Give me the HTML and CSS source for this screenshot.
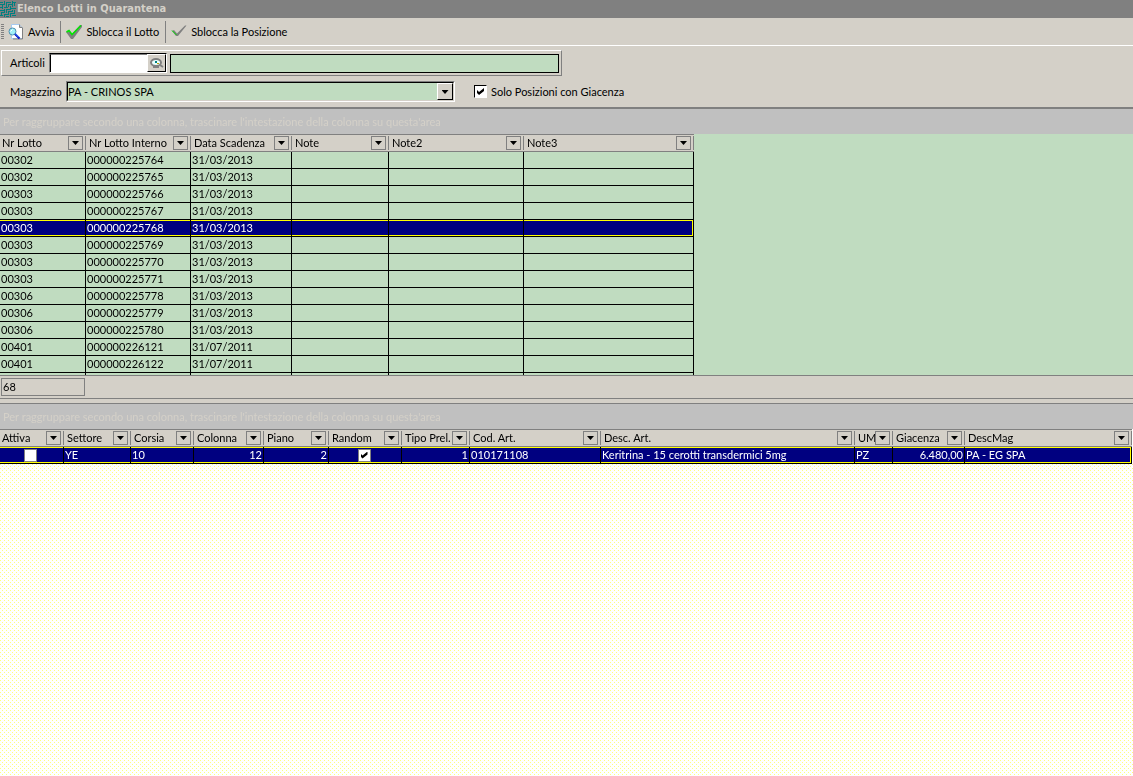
FILE: index.html
```
<!DOCTYPE html>
<html lang="it">
<head>
<meta charset="utf-8">
<title>Elenco Lotti in Quarantena</title>
<link rel="stylesheet" href="styles.css">
</head>
<body>
<header class="titlebar">
  <svg class="titlebar-icon" width="16" height="16" viewBox="0 0 16 16" fill="none" stroke="#008080" shape-rendering="crispEdges" aria-hidden="true">
    <path d="M0 1.500h3M4.500 0v4M0 3.500h5M2.500 4v4M0 6.500h2M6.500 1v6M4 6.500h4M7 1.500h4M8.500 3v3M9 3.500h3M12.500 0v6M14.500 1v4M13 1.500h3M10.500 5v4M11 7.500h5M0 9.500h4M4.500 8v4M6 8.500h4M6.500 9v3M1.500 11v4M2 11.500h2M0 14.500h3M4.500 13v3M5 13.500h4M8.500 10v4M9 10.500h4M12.500 9v2M14.500 9v4M10.500 12v4M11 12.500h4M12 14.500h4M6 15.500h3"/>
  </svg>
  <h1 class="titlebar-text">Elenco Lotti in Quarantena</h1>
</header>

<nav class="toolbar" aria-label="Comandi">
  <span class="grip"></span>
  <button class="tool" type="button">
    <svg width="16" height="16" viewBox="0 0 16 16" aria-hidden="true">
      <path d="M3.500 .5h8l3 3v11h-11z" fill="#fff" stroke="#a6caf0"/>
      <path d="M14.500 4v11H5" fill="none" stroke="#808080"/>
      <path d="M11.500 .5v3h3" fill="#c0c0c0" stroke="#808080"/>
      <circle cx="4.500" cy="7.500" r="3.500" fill="#a0f0f8" stroke="#5090b0"/>
      <path d="M2.500 7.500l2-2" stroke="#fff"/>
      <path d="M7 10l4.500 4.500" stroke="#0000c0" stroke-width="2"/>
      <path d="M7 9.500l4 4" stroke="#40a0ff"/>
    </svg>
    <span>Avvia</span>
  </button>
  <span class="divider"></span>
  <button class="tool" type="button">
    <svg width="16" height="16" viewBox="0 0 16 16" aria-hidden="true">
      <path d="M0 8l3-2 3 4L14 1h2v2L7 15H5z" fill="#808080"/>
      <path d="M.5 8l2.500-1.500 3 4L15 1.500" fill="none" stroke="#00e800" stroke-width="1.500"/>
    </svg>
    <span>Sblocca il Lotto</span>
  </button>
  <span class="divider"></span>
  <button class="tool" type="button">
    <svg width="16" height="16" viewBox="0 0 16 16" aria-hidden="true">
      <path d="M1 7l2-1 3 3.500L14 1.500h1.500L7 12H5z" fill="#808080"/>
      <path d="M1 6.500l4.500 4.500" stroke="#00e800" fill="none"/>
    </svg>
    <span>Sblocca la Posizione</span>
  </button>
</nav>

<form class="filters">
  <div class="article-row">
    <label for="articoli">Articoli</label>
    <div class="lookup">
      <input id="articoli" class="lookup-input" type="text">
      <button class="lookup-button" type="button" aria-label="Cerca articolo">
        <svg width="14" height="12" viewBox="0 0 14 12" aria-hidden="true">
          <ellipse cx="6" cy="5.500" rx="5" ry="3.500" fill="#e8ffff" stroke="#808080" stroke-width="2"/>
          <path d="M3 10h6M10 8l3 2" stroke="#808080" stroke-width="2"/>
          <path d="M5 4h2v2H5z" fill="#008080"/><path d="M7 6h2v1H7z" fill="#c0a000"/>
        </svg>
      </button>
    </div>
    <input class="article-name" type="text" readonly aria-label="Descrizione articolo">
  </div>
  <div class="store-row">
    <label for="magazzino">Magazzino</label>
    <div class="combo">
      <select id="magazzino"><option>PA - CRINOS SPA</option></select>
      <span class="combo-arrow"></span>
    </div>
    <label class="check-label"><input class="check sunken" type="checkbox" checked>Solo Posizioni con Giacenza</label>
  </div>
</form>

<main class="grids">
  <section class="lots" aria-label="Lotti">
    <p class="group-hint">Per raggruppare secondo una colonna, trascinare l'intestazione della colonna su questa'area</p>
    <div class="lots-view">
      <table class="grid lots-grid">
        <colgroup><col class="w86"><col class="w105"><col class="w101"><col class="w97"><col class="w135"><col class="w170"></colgroup>
        <thead><tr>
          <th><div class="head"><span>Nr Lotto</span><button type="button" class="drop" aria-label="Filtra Nr Lotto"></button></div></th>
          <th><div class="head"><span>Nr Lotto Interno</span><button type="button" class="drop" aria-label="Filtra Nr Lotto Interno"></button></div></th>
          <th><div class="head"><span>Data Scadenza</span><button type="button" class="drop" aria-label="Filtra Data Scadenza"></button></div></th>
          <th><div class="head"><span>Note</span><button type="button" class="drop" aria-label="Filtra Note"></button></div></th>
          <th><div class="head"><span>Note2</span><button type="button" class="drop" aria-label="Filtra Note2"></button></div></th>
          <th><div class="head"><span>Note3</span><button type="button" class="drop" aria-label="Filtra Note3"></button></div></th>
        </tr></thead>
        <tbody>
          <tr><td>00302</td><td>000000225764</td><td>31/03/2013</td><td></td><td></td><td></td></tr>
          <tr><td>00302</td><td>000000225765</td><td>31/03/2013</td><td></td><td></td><td></td></tr>
          <tr><td>00303</td><td>000000225766</td><td>31/03/2013</td><td></td><td></td><td></td></tr>
          <tr><td>00303</td><td>000000225767</td><td>31/03/2013</td><td></td><td></td><td></td></tr>
          <tr class="selected"><td>00303</td><td>000000225768</td><td>31/03/2013</td><td></td><td></td><td></td></tr>
          <tr><td>00303</td><td>000000225769</td><td>31/03/2013</td><td></td><td></td><td></td></tr>
          <tr><td>00303</td><td>000000225770</td><td>31/03/2013</td><td></td><td></td><td></td></tr>
          <tr><td>00303</td><td>000000225771</td><td>31/03/2013</td><td></td><td></td><td></td></tr>
          <tr><td>00306</td><td>000000225778</td><td>31/03/2013</td><td></td><td></td><td></td></tr>
          <tr><td>00306</td><td>000000225779</td><td>31/03/2013</td><td></td><td></td><td></td></tr>
          <tr><td>00306</td><td>000000225780</td><td>31/03/2013</td><td></td><td></td><td></td></tr>
          <tr><td>00401</td><td>000000226121</td><td>31/07/2011</td><td></td><td></td><td></td></tr>
          <tr><td>00401</td><td>000000226122</td><td>31/07/2011</td><td></td><td></td><td></td></tr>
          <tr><td></td><td></td><td></td><td></td><td></td><td></td></tr>
        </tbody>
      </table>
    </div>
    <div class="summary"><output class="count">68</output></div>
  </section>

  <section class="positions" aria-label="Posizioni">
    <p class="group-hint">Per raggruppare secondo una colonna, trascinare l'intestazione della colonna su questa'area</p>
    <table class="grid positions-grid">
      <colgroup><col class="w64"><col class="w67"><col class="w63"><col class="w70"><col class="w65"><col class="w73"><col class="w68"><col class="w131"><col class="w254"><col class="w38"><col class="w72"><col></colgroup>
      <thead><tr>
        <th><div class="head"><span>Attiva</span><button type="button" class="drop" aria-label="Filtra Attiva"></button></div></th>
        <th><div class="head"><span>Settore</span><button type="button" class="drop" aria-label="Filtra Settore"></button></div></th>
        <th><div class="head"><span>Corsia</span><button type="button" class="drop" aria-label="Filtra Corsia"></button></div></th>
        <th><div class="head"><span>Colonna</span><button type="button" class="drop" aria-label="Filtra Colonna"></button></div></th>
        <th><div class="head"><span>Piano</span><button type="button" class="drop" aria-label="Filtra Piano"></button></div></th>
        <th><div class="head"><span>Random</span><button type="button" class="drop" aria-label="Filtra Random"></button></div></th>
        <th><div class="head"><span>Tipo Prel.</span><button type="button" class="drop" aria-label="Filtra Tipo Prel."></button></div></th>
        <th><div class="head"><span>Cod. Art.</span><button type="button" class="drop" aria-label="Filtra Cod. Art."></button></div></th>
        <th><div class="head"><span>Desc. Art.</span><button type="button" class="drop" aria-label="Filtra Desc. Art."></button></div></th>
        <th><div class="head"><span>UM</span><button type="button" class="drop" aria-label="Filtra UM"></button></div></th>
        <th><div class="head"><span>Giacenza</span><button type="button" class="drop" aria-label="Filtra Giacenza"></button></div></th>
        <th><div class="head"><span>DescMag</span><button type="button" class="drop" aria-label="Filtra DescMag"></button></div></th>
      </tr></thead>
      <tbody>
        <tr class="selected">
          <td class="mid"><input class="check" type="checkbox" aria-label="Attiva"></td>
          <td>YE</td><td>10</td><td class="num">12</td><td class="num">2</td>
          <td class="mid"><input class="check" type="checkbox" checked aria-label="Random"></td>
          <td class="num">1</td><td>010171108</td><td>Keritrina - 15 cerotti transdermici 5mg</td><td>PZ</td><td class="num">6.480,00</td><td>PA - EG SPA</td>
        </tr>
      </tbody>
    </table>
    <svg class="empty-area" aria-hidden="true">
      <defs>
        <pattern id="dots" width="4" height="4" patternUnits="userSpaceOnUse">
          <path d="M0 0h1v1H0zM2 2h1v1H2z" fill="#ffff80" shape-rendering="crispEdges"/>
        </pattern>
      </defs>
      <rect width="100%" height="100%" fill="url(#dots)"/>
    </svg>
  </section>
</main>
</body>
</html>
```
FILE: styles.css
```
:root {
  --face: #d4d0c8;
  --shade: #808080;
  --green: #c0dcc0;
  --navy: #000080;
  --ink: #000;
}

* { box-sizing: border-box; }

body {
  margin: 0;
  min-height: 100vh;
  display: flex;
  flex-direction: column;
  background: var(--face);
  color: var(--ink);
  font: 11px/14px Lato, "Noto Sans", sans-serif;
}

button, input, select { font: inherit; color: inherit; margin: 0; border-radius: 0; }

/* Title bar */
.titlebar {
  display: flex;
  align-items: center;
  gap: 1px;
  height: 18px;
  background: var(--shade);
  color: var(--face);
}
.titlebar-icon { flex: none; }
.titlebar-text { margin: 0; font-family: "DejaVu Sans Condensed", sans-serif; font-size: 11px; font-weight: bold; }

/* Toolbar */
.toolbar {
  display: flex;
  align-items: center;
  height: 28px;
  padding-left: 1px;
  border-bottom: 1px solid #fff;
}
.grip {
  width: 3px;
  height: 15px;
  margin-right: 4px;
  background: repeating-linear-gradient(var(--shade) 0 1px, var(--face) 1px 2px);
}
.tool {
  display: flex;
  align-items: center;
  gap: 4px;
  height: 22px;
  padding: 0 6px 0 0;
  border: 0;
  background: none;
  white-space: nowrap;
}
.divider { width: 1px; height: 22px; margin-right: 5px; background: var(--shade); }

/* Filters */
.filters { padding: 4px 0 5px 1px; border-bottom: 2px solid var(--shade); }
.article-row {
  display: flex;
  align-items: center;
  width: 561px;
  max-width: 100%;
  height: 26px;
  padding-left: 8px;
  padding-right: 2px;
  border: 1px solid;
  border-color: #fff var(--shade) var(--shade) #fff;
}
.article-row label { width: 39px; }
.lookup {
  display: flex;
  width: 118px;
  height: 20px;
  border: 1px solid;
  border-color: var(--ink) #fff #fff var(--shade);
  background: #fff;
}
.lookup-input {
  flex: 1;
  min-width: 0;
  padding: 0 1px;
  border: 0;
  border-left: 1px solid var(--ink);
  border-top: 1px solid var(--shade);
  background: #fff;
}
.lookup-button {
  display: grid;
  place-items: center;
  width: 19px;
  padding: 0;
  border: 1px solid;
  border-color: #fff var(--ink) var(--ink) #fff;
  background: var(--face);
}
.article-name {
  flex: 1;
  min-width: 0;
  height: 19px;
  margin-left: 3px;
  border: 1px solid var(--ink);
  background: var(--green);
}
.store-row { display: flex; align-items: center; padding: 5px 0 0 9px; }
.store-row > label:first-child { width: 56px; }
.combo {
  position: relative;
  width: 389px;
  height: 21px;
  border: 1px solid;
  border-color: var(--shade) #fff #fff var(--shade);
}
.combo select {
  display: block;
  width: 100%;
  height: 100%;
  padding: 0;
  appearance: none;
  border: 1px solid;
  border-color: var(--ink) var(--face) var(--face) var(--ink);
  background: var(--green);
}
.combo-arrow {
  position: absolute;
  top: 1px;
  right: 1px;
  bottom: 1px;
  width: 16px;
  border: 1px solid;
  border-color: #fff var(--ink) var(--ink) #fff;
  background: var(--face);
  pointer-events: none;
}
.combo-arrow::before, .drop::before {
  content: "";
  display: block;
  width: 7px;
  height: 4px;
  background: var(--ink);
  clip-path: polygon(0 0, 100% 0, 50% 100%);
}
.combo-arrow::before { margin: 6px auto 0; }
.check-label { display: flex; align-items: center; gap: 4px; padding-left: 19px; }

/* Check boxes */
.check {
  appearance: none;
  flex: none;
  width: 13px;
  height: 13px;
  border: 1px solid var(--shade);
  background: #fff;
}
.check.sunken { border-color: var(--ink) #fff #fff var(--ink); }
.check:checked::before {
  content: "";
  display: block;
  width: 7px;
  height: 7px;
  margin: 2px;
  background: var(--ink);
  clip-path: polygon(0 29%, 29% 58%, 100% 0, 100% 43%, 29% 100%, 0 72%);
}

/* Grids */
.grids { flex: 1; display: flex; flex-direction: column; }
.group-hint {
  margin: 0;
  padding: 6px 3px 5px;
  background: #c0c0c0;
  color: var(--face);
}
.lots-view {
  max-height: 241px;
  overflow-y: auto;
  scrollbar-width: none;
  background: var(--green);
}
.summary { padding: 2px 1px; border: solid var(--shade); border-width: 1px 0; }
.count {
  display: block;
  width: 84px;
  padding: 1px;
  border: 1px solid var(--shade);
}
.positions {
  flex: 1;
  display: flex;
  flex-direction: column;
  margin-top: 4px;
  border-top: 1px solid var(--shade);
  background: #fff;
}
.empty-area { flex: 1; display: block; width: 100%; height: 0; }

.grid { table-layout: fixed; border-collapse: separate; border-spacing: 0; }
.lots-grid { width: 694px; }
.positions-grid { width: calc(100% - 1px); }
.grid th {
  padding: 0;
  border: solid var(--shade);
  border-width: 1px 0;
  background: var(--face);
  font-weight: normal;
  text-align: left;
  white-space: nowrap;
}
.head {
  display: flex;
  align-items: center;
  justify-content: space-between;
  height: 14px;
  margin: 1px 0;
  padding: 0 2px 0 3px;
  border-right: 1px solid var(--shade);
}
.grid th:first-child .head { padding-left: 2px; }
.head span { min-width: 0; overflow: hidden; }
.drop {
  flex: none;
  display: grid;
  place-items: center;
  width: 15px;
  height: 14px;
  padding: 0;
  border: 1px solid var(--shade);
  background: var(--face);
}
.grid td {
  height: 17px;
  padding: 0 1px;
  border: solid var(--ink);
  border-width: 0 1px 1px 0;
  background: var(--green);
  line-height: 16px;
  white-space: nowrap;
}
.grid .selected td {
  background: var(--navy);
  color: #fff;
  box-shadow: inset 0 1px #ff0, inset 0 -1px #ff0;
}
.grid .selected td:last-child { box-shadow: inset 0 1px #ff0, inset 0 -1px #ff0, inset -1px 0 #ff0; }
.grid td.num { text-align: right; }
.grid td.mid { padding: 0 3px 0 1px; text-align: center; line-height: 0; }
.grid .mid .check { vertical-align: top; }

.w38 { width: 38px; }
.w63 { width: 63px; }
.w64 { width: 64px; }
.w65 { width: 65px; }
.w67 { width: 67px; }
.w68 { width: 68px; }
.w70 { width: 70px; }
.w72 { width: 72px; }
.w73 { width: 73px; }
.w86 { width: 86px; }
.w97 { width: 97px; }
.w101 { width: 101px; }
.w105 { width: 105px; }
.w131 { width: 131px; }
.w135 { width: 135px; }
.w170 { width: 170px; }
.w254 { width: 254px; }
```
